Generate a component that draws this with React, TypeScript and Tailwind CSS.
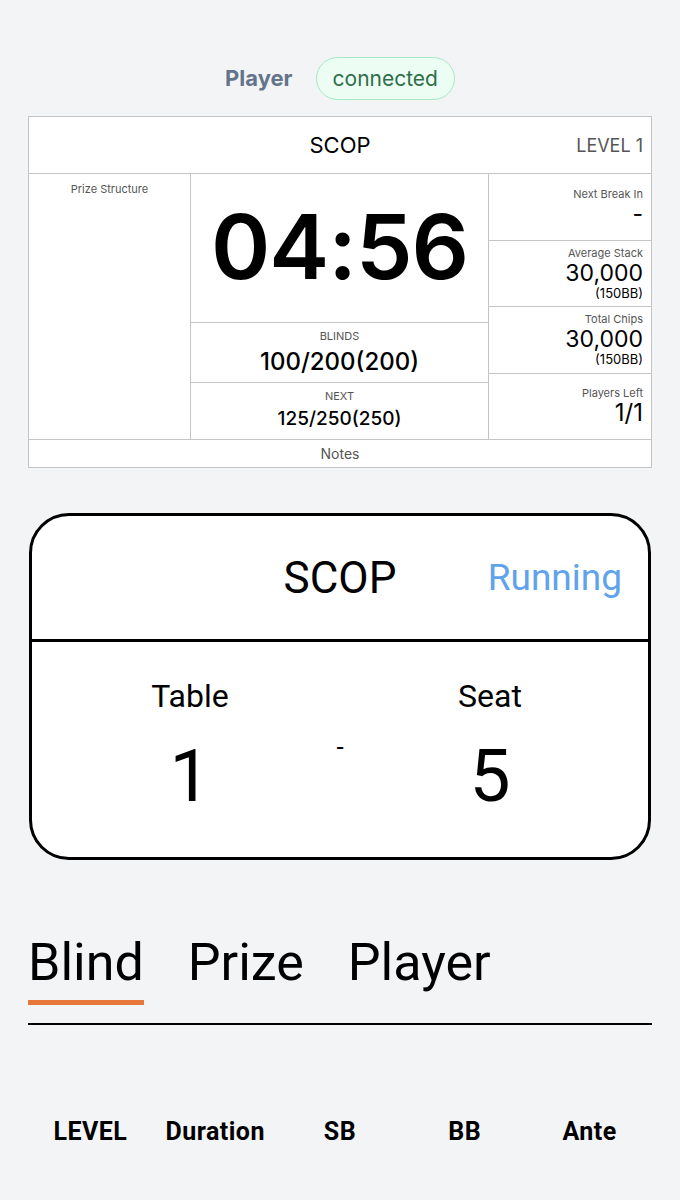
import React from 'react'

const StatCell = ({ label, value, sub, big }: { label: string; value: string; sub?: string; big?: boolean }) => (
    <div className="flex flex-1 flex-col items-end justify-center border-b border-[#c4c4c4] px-2 last:border-b-0">
        <span className="text-[11px] leading-[14px] text-[#555]">{label}</span>
        <span className={big ? 'text-[24px] leading-[26px] text-black' : 'text-[23px] leading-[26px] text-black'}>{value}</span>
        {sub && <span className="text-[13px] leading-[15px] text-black">{sub}</span>}
    </div>
)

const ClockBoard = () => (
    <div className="flex flex-col border border-[#c4c4c4] bg-white font-['Inter',sans-serif]">
        <div className="grid h-[57px] grid-cols-[1fr_auto_1fr] items-center border-b border-[#c4c4c4] px-2">
            <span></span>
            <span className="text-[22px] text-black">SCOP</span>
            <span className="text-right text-[18px] text-[#555]">LEVEL 1</span>
        </div>
        <div className="grid h-[265px] grid-cols-[162px_298px_1fr]">
            <div className="border-r border-[#c4c4c4] pt-[7px] text-center text-[11px] text-[#555]">Prize Structure</div>
            <div className="flex flex-col border-r border-[#c4c4c4]">
                <div className="flex h-[149px] items-center justify-center border-b border-[#c4c4c4] pb-[3px]">
                    <span className="text-[90px] leading-none font-semibold tracking-[-1px] text-black">04:56</span>
                </div>
                <div className="flex h-[60px] flex-col items-center border-b border-[#c4c4c4] pt-[6px]">
                    <span className="text-[11px] leading-[14px] text-[#555]">BLINDS</span>
                    <span className="mt-[4px] text-[24px] leading-[30px] font-medium text-black">100/200(200)</span>
                </div>
                <div className="flex flex-1 flex-col items-center pt-[6px]">
                    <span className="text-[11px] leading-[14px] text-[#555]">NEXT</span>
                    <span className="mt-[2px] text-[19px] leading-[28px] font-medium text-black">125/250(250)</span>
                </div>
            </div>
            <div className="flex flex-col">
                <StatCell label="Next Break In" value="-" />
                <StatCell label="Average Stack" value="30,000" sub="(150BB)" />
                <StatCell label="Total Chips" value="30,000" sub="(150BB)" />
                <StatCell label="Players Left" value="1/1" big />
            </div>
        </div>
        <div className="flex h-[28px] items-center justify-center border-t border-[#c4c4c4] text-[14px] text-[#555]">Notes</div>
    </div>
)

const SeatCard = () => (
    <div className="flex h-[347px] flex-col overflow-hidden rounded-[40px] border-[3px] border-black bg-white font-['Roboto',sans-serif]">
        <div className="grid h-[126px] grid-cols-[1fr_auto_1fr] items-center border-b-[3px] border-black px-[26px]">
            <span></span>
            <span className="text-[44px] leading-none text-black">SCOP</span>
            <span className="text-right text-[37px] leading-none text-[#5fa3ec]">Running</span>
        </div>
        <div className="flex flex-1 justify-center pt-[36px]">
            <div className="flex w-[150px] flex-col items-center">
                <span className="text-[32px] leading-[36px] text-black">Table</span>
                <span className="mt-[22px] text-[73px] leading-[80px] text-black">1</span>
            </div>
            <div className="flex w-[150px] flex-col items-center pt-[54px]">
                <span className="text-[26px] leading-[30px] text-black">-</span>
            </div>
            <div className="flex w-[150px] flex-col items-center">
                <span className="text-[32px] leading-[36px] text-black">Seat</span>
                <span className="mt-[22px] text-[73px] leading-[80px] text-black">5</span>
            </div>
        </div>
    </div>
)

const Tabs = () => (
    <div className="flex flex-col font-['Roboto',sans-serif]">
        <div className="flex gap-[44px]">
            <div className="flex flex-col">
                <span className="text-[52px] leading-[60px] text-black">Blind</span>
                <span className="mt-[7px] h-[5px] w-full bg-[#e8773a]"></span>
            </div>
            <span className="text-[52px] leading-[60px] text-black">Prize</span>
            <span className="text-[52px] leading-[60px] text-black">Player</span>
        </div>
        <div className="mt-[18px] h-[2px] bg-black"></div>
    </div>
)

export default function App() {
    return (
        <div className="min-h-[1200px] bg-[#f3f4f6] px-[28px] pt-[57px]">
            <div className="flex items-center justify-center gap-[23px] font-['Inter',sans-serif]">
                <span className="text-[22px] font-bold text-[#64748b]">Player</span>
                <span className="flex h-[43px] items-center rounded-full border border-[#a7e8c4] bg-[#ecfdf3] px-[16px] text-[21px] text-[#2f6e4a]">connected</span>
            </div>
            <div className="mt-[16px]">
                <ClockBoard />
            </div>
            <div className="mt-[45px] px-[1px]">
                <SeatCard />
            </div>
            <div className="mt-[73px]">
                <Tabs />
            </div>
            <div className="mt-[88px] grid grid-cols-5 font-['Roboto',sans-serif]">
                {['LEVEL', 'Duration', 'SB', 'BB', 'Ante'].map((h) => (
                    <span key={h} className="text-center text-[25px] font-bold tracking-[0.5px] text-black">{h}</span>
                ))}
            </div>
        </div>
    )
}
